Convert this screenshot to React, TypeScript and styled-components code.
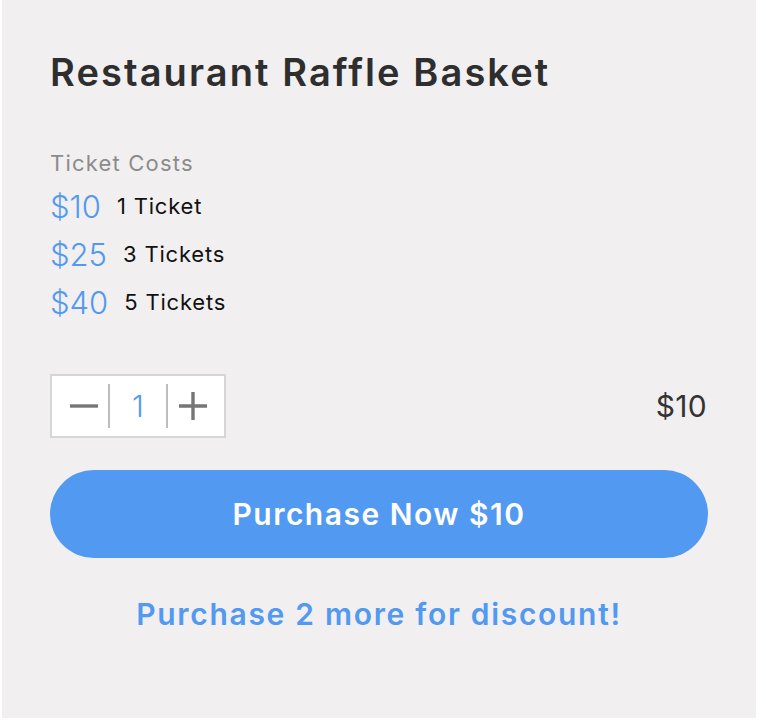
import React from "react";
import styled, { createGlobalStyle } from "styled-components";

const Global = createGlobalStyle`
  html, body { margin: 0; padding: 0; background: #ffffff; }
  body { font-family: "Inter", "Noto Sans", sans-serif; }
`;

const Card = styled.div`
  box-sizing: border-box;
  width: 754px;
  height: 718px;
  margin-left: 2px;
  background: #f1eff0;
  padding: 46px 48px 0 48px;
  display: flex;
  flex-direction: column;
`;

const Title = styled.h1`
  margin: 0;
  font-size: 38px;
  font-weight: 600;
  color: #2e2e2e;
  letter-spacing: 2.1px;
  line-height: 52px;
`;

const CostsLabel = styled.div`
  margin-top: 52px;
  font-size: 22px;
  color: #8c8c8c;
  letter-spacing: 1.2px;
  line-height: 26px;
`;

const PriceList = styled.div`
  display: flex;
  flex-direction: column;
  gap: 12px;
  margin-top: 12px;
`;

const PriceRow = styled.div`
  display: flex;
  align-items: center;
  height: 36px;
`;

const Price = styled.span`
  font-size: 31px;
  font-weight: 300;
  color: #5199f1;
  margin-right: 16px;
`;

const PriceLabel = styled.span`
  font-size: 22px;
  color: #111111;
  letter-spacing: 0.8px;
`;

const OrderRow = styled.div`
  display: flex;
  align-items: center;
  justify-content: space-between;
  margin-top: 54px;
`;

const Stepper = styled.div`
  box-sizing: border-box;
  display: flex;
  align-items: center;
  width: 176px;
  height: 64px;
  border: 2px solid #d6d6d6;
  background: #ffffff;
`;

const StepButton = styled.button<{ $side: "left" | "right" }>`
  box-sizing: border-box;
  width: 56px;
  height: 100%;
  border: none;
  background: transparent;
  padding: ${(p) => (p.$side === "left" ? "0 0 0 8px" : "0 7px 0 0")};
  display: flex;
  align-items: center;
  justify-content: center;
  cursor: pointer;
`;

const Divider = styled.span`
  width: 2px;
  height: 44px;
  background: #bdbdbd;
`;

const Qty = styled.span`
  flex: 1;
  text-align: center;
  font-size: 30px;
  font-weight: 300;
  color: #5199f1;
`;

const Total = styled.span`
  font-size: 30px;
  font-weight: 400;
  color: #333333;
  letter-spacing: 0.3px;
  margin-right: 1px;
`;

const PurchaseButton = styled.button`
  margin-top: 32px;
  width: 658px;
  height: 88px;
  border: none;
  border-radius: 44px;
  background: #5199f1;
  color: #ffffff;
  font-family: "Inter", sans-serif;
  font-size: 30px;
  font-weight: 600;
  letter-spacing: 1.5px;
  cursor: pointer;
`;

const Discount = styled.div`
  margin-top: 38px;
  text-align: center;
  font-size: 30px;
  font-weight: 600;
  letter-spacing: 1.7px;
  color: #5199f1;
`;

const prices = [
  { price: "$10", label: "1 Ticket" },
  { price: "$25", label: "3 Tickets" },
  { price: "$40", label: "5 Tickets" },
];

export default function App() {
  return (
    <>
      <Global />
      <Card>
        <Title>Restaurant Raffle Basket</Title>
        <CostsLabel>Ticket Costs</CostsLabel>
        <PriceList>
          {prices.map((p) => (
            <PriceRow key={p.price}>
              <Price>{p.price}</Price>
              <PriceLabel>{p.label}</PriceLabel>
            </PriceRow>
          ))}
        </PriceList>
        <OrderRow>
          <Stepper>
            <StepButton $side="left" aria-label="decrease">
              <svg width="28" height="28" viewBox="0 0 28 28">
                <path d="M0 14H28" stroke="#767676" strokeWidth="3.4" />
              </svg>
            </StepButton>
            <Divider />
            <Qty>1</Qty>
            <Divider />
            <StepButton $side="right" aria-label="increase">
              <svg width="28" height="28" viewBox="0 0 28 28">
                <path d="M0 14H28M14 0V28" stroke="#767676" strokeWidth="3.4" />
              </svg>
            </StepButton>
          </Stepper>
          <Total>$10</Total>
        </OrderRow>
        <PurchaseButton>Purchase Now $10</PurchaseButton>
        <Discount>Purchase 2 more for discount!</Discount>
      </Card>
    </>
  );
}
